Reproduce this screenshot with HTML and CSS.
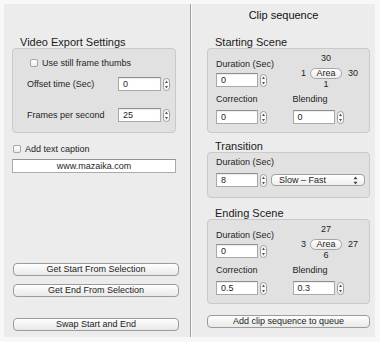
FILE: index.html
```html
<!DOCTYPE html>
<html lang="en">
<head>
  <meta charset="UTF-8">
  <title>Clip sequence</title>
  <link rel="stylesheet" href="styles.css">
</head>
<body>
  <div class="window">
    <div class="left-pane">
      <div class="group-title">Video Export Settings</div>
      <div class="group export-box">
        <div class="check-row first">
          <span class="checkbox"></span>
          <span>Use still frame thumbs</span>
        </div>
        <div class="field-row offset-row">
          <span class="row-label">Offset time (Sec)</span>
          <span class="input wide">0</span>
          <svg class="stepper" width="7" height="13" viewBox="0 0 7 13"><rect x=".5" y=".5" width="6" height="12" rx="3" fill="#fbfbfb" stroke="#9d9d9d"/><path d="M3.5 2.6L5 4.9H2z M3.5 10.4L5 8.1H2z" fill="#555"/></svg>
        </div>
        <div class="field-row fps-row">
          <span class="row-label">Frames per second</span>
          <span class="input wide">25</span>
          <svg class="stepper" width="7" height="13" viewBox="0 0 7 13"><rect x=".5" y=".5" width="6" height="12" rx="3" fill="#fbfbfb" stroke="#9d9d9d"/><path d="M3.5 2.6L5 4.9H2z M3.5 10.4L5 8.1H2z" fill="#555"/></svg>
        </div>
      </div>

      <div class="check-row caption-row">
        <span class="checkbox"></span>
        <span>Add text caption</span>
      </div>
      <div class="text-field">www.mazaika.com</div>

      <div class="button btn-start">Get Start From Selection</div>
      <div class="button btn-end">Get End From Selection</div>
      <div class="button btn-swap">Swap Start and End</div>
    </div>

    <div class="divider"></div>

    <div class="right-pane">
      <div class="pane-title">Clip sequence</div>

      <div class="group-title scene-title">Starting Scene</div>
      <div class="group scene">
        <div class="scene-row">
          <div class="cell">
            <div class="cell-label">Duration (Sec)</div>
            <div class="input-line">
              <span class="input">0</span>
              <svg class="stepper" width="7" height="13" viewBox="0 0 7 13"><rect x=".5" y=".5" width="6" height="12" rx="3" fill="#fbfbfb" stroke="#9d9d9d"/><path d="M3.5 2.6L5 4.9H2z M3.5 10.4L5 8.1H2z" fill="#555"/></svg>
            </div>
          </div>
          <div class="area">
            <span class="area-num top">30</span>
            <span class="area-num left">1</span>
            <span class="area-pill">Area</span>
            <span class="area-num right">30</span>
            <span class="area-num bottom">1</span>
          </div>
        </div>
        <div class="scene-row second">
          <div class="cell">
            <div class="cell-label">Correction</div>
            <div class="input-line">
              <span class="input">0</span>
              <svg class="stepper" width="7" height="13" viewBox="0 0 7 13"><rect x=".5" y=".5" width="6" height="12" rx="3" fill="#fbfbfb" stroke="#9d9d9d"/><path d="M3.5 2.6L5 4.9H2z M3.5 10.4L5 8.1H2z" fill="#555"/></svg>
            </div>
          </div>
          <div class="cell">
            <div class="cell-label">Blending</div>
            <div class="input-line">
              <span class="input">0</span>
              <svg class="stepper" width="7" height="13" viewBox="0 0 7 13"><rect x=".5" y=".5" width="6" height="12" rx="3" fill="#fbfbfb" stroke="#9d9d9d"/><path d="M3.5 2.6L5 4.9H2z M3.5 10.4L5 8.1H2z" fill="#555"/></svg>
            </div>
          </div>
        </div>
      </div>

      <div class="group-title transition-title">Transition</div>
      <div class="group transition">
        <div class="cell-label">Duration (Sec)</div>
        <div class="input-line transition-line">
          <span class="input">8</span>
          <svg class="stepper" width="7" height="13" viewBox="0 0 7 13"><rect x=".5" y=".5" width="6" height="12" rx="3" fill="#fbfbfb" stroke="#9d9d9d"/><path d="M3.5 2.6L5 4.9H2z M3.5 10.4L5 8.1H2z" fill="#555"/></svg>
          <div class="popup">
            <span>Slow &ndash; Fast</span>
            <svg width="5" height="9" viewBox="0 0 5 9"><path d="M2.5 0.5L4.5 3.3H0.5z M2.5 8.5L4.5 5.7H0.5z" fill="#444"/></svg>
          </div>
        </div>
      </div>

      <div class="group-title ending-title">Ending Scene</div>
      <div class="group scene ending">
        <div class="scene-row">
          <div class="cell">
            <div class="cell-label">Duration (Sec)</div>
            <div class="input-line">
              <span class="input">0</span>
              <svg class="stepper" width="7" height="13" viewBox="0 0 7 13"><rect x=".5" y=".5" width="6" height="12" rx="3" fill="#fbfbfb" stroke="#9d9d9d"/><path d="M3.5 2.6L5 4.9H2z M3.5 10.4L5 8.1H2z" fill="#555"/></svg>
            </div>
          </div>
          <div class="area">
            <span class="area-num top">27</span>
            <span class="area-num left">3</span>
            <span class="area-pill">Area</span>
            <span class="area-num right">27</span>
            <span class="area-num bottom">6</span>
          </div>
        </div>
        <div class="scene-row second">
          <div class="cell">
            <div class="cell-label">Correction</div>
            <div class="input-line">
              <span class="input">0.5</span>
              <svg class="stepper" width="7" height="13" viewBox="0 0 7 13"><rect x=".5" y=".5" width="6" height="12" rx="3" fill="#fbfbfb" stroke="#9d9d9d"/><path d="M3.5 2.6L5 4.9H2z M3.5 10.4L5 8.1H2z" fill="#555"/></svg>
            </div>
          </div>
          <div class="cell">
            <div class="cell-label">Blending</div>
            <div class="input-line">
              <span class="input">0.3</span>
              <svg class="stepper" width="7" height="13" viewBox="0 0 7 13"><rect x=".5" y=".5" width="6" height="12" rx="3" fill="#fbfbfb" stroke="#9d9d9d"/><path d="M3.5 2.6L5 4.9H2z M3.5 10.4L5 8.1H2z" fill="#555"/></svg>
            </div>
          </div>
        </div>
      </div>

      <div class="button btn-queue">Add clip sequence to queue</div>
    </div>
  </div>
</body>
</html>
```

FILE: styles.css
```css
* {
  box-sizing: border-box;
}

body {
  margin: 0;
  background-color: #f8f8f8;
  font-family: "Liberation Sans", Arial, sans-serif;
  font-size: 9px;
  color: #1e1e1e;
}

.window {
  margin: 4px 0 0 4px;
  width: 371px;
  height: 333px;
  background-color: #ececec;
  display: flex;
}

.left-pane {
  width: 186px;
  padding: 33px 0 0 8px;
  display: flex;
  flex-direction: column;
}

.divider {
  width: 2px;
  border-left: 1px solid #9e9e9e;
  background-color: #fafafa;
}

.right-pane {
  flex: 1;
  padding: 5px 0 0 15px;
  display: flex;
  flex-direction: column;
}

.pane-title {
  font-size: 11px;
  line-height: 13px;
  text-align: center;
  padding-right: 15px;
  color: #111;
}

.group-title {
  font-size: 11px;
  line-height: 11px;
  height: 11px;
  padding-left: 8px;
  color: #1a1a1a;
}

.group {
  background-color: #e1e1e1;
  border: 1px solid #c9c9c9;
  border-radius: 4px;
}

/* left side */

.export-box {
  width: 164px;
  height: 85px;
  padding: 8px 0 0 14px;
}

.check-row {
  display: flex;
  align-items: center;
  height: 12px;
  line-height: 12px;
}

.check-row.first {
  padding-left: 3px;
}

.checkbox {
  width: 8px;
  height: 8px;
  border: 1px solid #a4a4a4;
  border-radius: 2px;
  background: linear-gradient(#ffffff, #ededed);
  margin-right: 4px;
}

.field-row {
  display: flex;
  align-items: center;
  height: 14px;
}

.offset-row {
  margin-top: 8px;
}

.fps-row {
  margin-top: 17px;
}

.row-label {
  width: 91px;
}

.input {
  display: block;
  width: 42px;
  height: 14px;
  line-height: 13px;
  padding-left: 4px;
  background-color: #fff;
  border: 1px solid #a9a9a9;
  border-top-color: #8e8e8e;
  box-shadow: inset 0 1px 1px rgba(0, 0, 0, 0.08);
}

.input.wide {
  width: 43px;
}

.stepper {
  display: block;
  margin-left: 2px;
  flex-shrink: 0;
}

.caption-row {
  margin-top: 10px;
  padding-left: 1px;
}

.text-field {
  width: 164px;
  height: 14px;
  line-height: 13px;
  margin-top: 4px;
  text-align: center;
  background-color: #fff;
  border: 1px solid #ababab;
  border-top-color: #939393;
}

.button {
  height: 13px;
  line-height: 11px;
  text-align: center;
  border: 1px solid #9b9b9b;
  border-radius: 4px;
  background: linear-gradient(#ffffff, #f1f1f1 60%, #e9e9e9);
  color: #222;
}

.left-pane .button {
  width: 166px;
  margin-left: 1px;
}

.btn-start {
  margin-top: 90px;
}

.btn-end {
  margin-top: 8px;
}

.btn-swap {
  margin-top: 21px;
}

/* right side */

.scene-title {
  margin-top: 15px;
}

.scene {
  width: 163px;
  height: 85px;
  padding: 4px 0 0 8px;
}

.scene-row {
  display: flex;
  align-items: flex-start;
}

.scene-row.second {
  margin-top: 4px;
}

.cell {
  width: 77px;
}

.scene-row:first-child .cell {
  margin-top: 6px;
}

.cell-label {
  line-height: 11px;
  height: 11px;
}

.input-line {
  display: flex;
  align-items: center;
  margin-top: 3px;
}

.scene-row.second .input-line {
  margin-top: 5px;
}

.area {
  display: grid;
  grid-template-columns: 8px 32px auto;
  grid-template-rows: 11px 11px 11px;
  column-gap: 4px;
  row-gap: 2px;
  margin-left: 5px;
  line-height: 11px;
}

.area-num {
  text-align: center;
}

.area-num.top {
  grid-column: 2;
  grid-row: 1;
  margin-bottom: -3px;
}

.area-num.left {
  grid-column: 1;
  grid-row: 2;
  text-align: right;
  margin-top: 2px;
}

.area-pill {
  grid-column: 2;
  grid-row: 2;
  margin-top: 2px;
  height: 11px;
  line-height: 9px;
  text-align: center;
  border: 1px solid #a5a5a5;
  border-radius: 6px;
  background: linear-gradient(#ffffff, #ececec);
}

.area-num.right {
  grid-column: 3;
  grid-row: 2;
  text-align: left;
  margin-top: 2px;
  padding-left: 2px;
}

.area-num.bottom {
  grid-column: 2;
  grid-row: 3;
}

.transition-title {
  margin-top: 8px;
}

.transition {
  width: 163px;
  height: 46px;
  padding: 4px 0 0 8px;
}

.transition-line {
  margin-top: 5px;
}

.popup {
  display: flex;
  align-items: center;
  justify-content: space-between;
  width: 94px;
  height: 12px;
  margin-left: 4px;
  padding: 0 6px 0 7px;
  border: 1px solid #a0a0a0;
  border-radius: 4px;
  background: linear-gradient(#ffffff, #efefef);
}

.ending-title {
  margin-top: 10px;
}

.btn-queue {
  width: 163px;
  margin-top: 11px;
}
```
